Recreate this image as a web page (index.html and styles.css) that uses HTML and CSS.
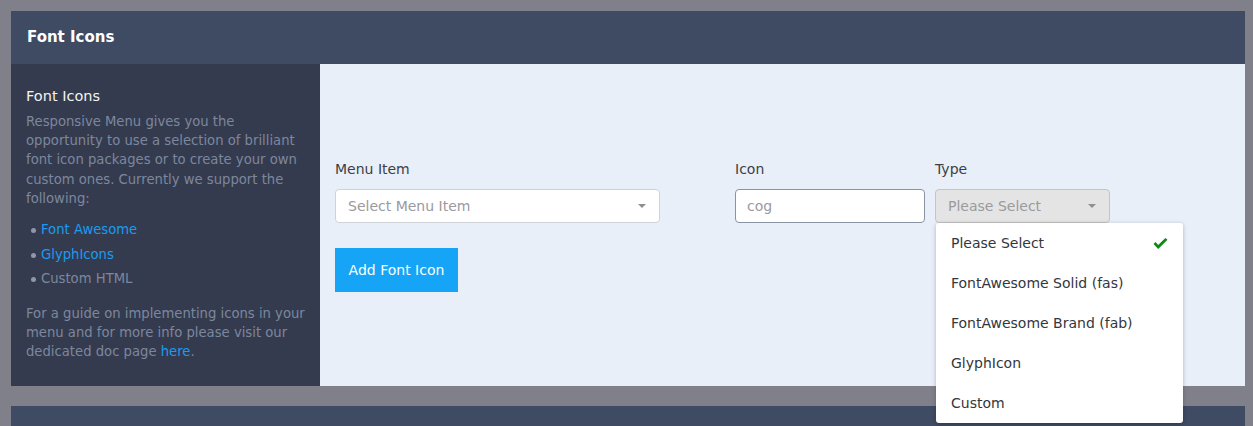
FILE: index.html
```html
<!DOCTYPE html>
<html>
<head>
<meta charset="utf-8">
<link rel="stylesheet" href="styles.css">
</head>
<body>
<div class="panel">
  <div class="panel-head">Font Icons</div>
  <div class="panel-body">
    <aside class="side">
      <h3 class="side-title">Font Icons</h3>
      <p class="side-text">Responsive Menu gives you the opportunity to use a selection of brilliant font icon packages or to create your own custom ones. Currently we support the following:</p>
      <ul class="side-list">
        <li><a class="link">Font Awesome</a></li>
        <li><a class="link">GlyphIcons</a></li>
        <li>Custom HTML</li>
      </ul>
      <p class="side-text">For a guide on implementing icons in your menu and for more info please visit our dedicated doc page <a class="link">here</a>.</p>
    </aside>
    <main class="content">
      <div class="form-row">
        <div class="field field-menu">
          <label class="label">Menu Item</label>
          <div class="select">
            <span class="placeholder">Select Menu Item</span>
            <span class="caret"></span>
          </div>
        </div>
        <div class="field field-icon">
          <label class="label">Icon</label>
          <div class="input"><span class="placeholder">cog</span></div>
        </div>
        <div class="field field-type">
          <label class="label">Type</label>
          <div class="select disabled">
            <span class="placeholder">Please Select</span>
            <span class="caret"></span>
          </div>
          <ul class="dropdown">
            <li class="opt selected">Please Select
              <svg class="check" viewBox="0 0 16 14" width="15" height="13"><path d="M0.5 7.5 L5.5 12.8 L15.5 3 L13.3 1 L5.5 8.6 L2.7 5.4 Z" fill="#0b8a12"/></svg>
            </li>
            <li class="opt">FontAwesome Solid (fas)</li>
            <li class="opt">FontAwesome Brand (fab)</li>
            <li class="opt">GlyphIcon</li>
            <li class="opt">Custom</li>
          </ul>
        </div>
      </div>
      <button class="btn">Add Font Icon</button>
    </main>
  </div>
</div>
<div class="panel next">
  <div class="panel-head"></div>
</div>
</body>
</html>
```
FILE: styles.css
```css
html, body {
  margin: 0;
  padding: 0;
}
body {
  background: #80808b;
  font-family: "DejaVu Sans", "Noto Sans", sans-serif;
  padding: 11px 8px 0 11px;
  height: 426px;
  box-sizing: border-box;
  overflow: hidden;
}
.panel {
  width: 1234px;
}
.panel-head {
  background: #3f4a63;
  color: #ffffff;
  font-weight: bold;
  font-size: 15px;
  height: 53px;
  line-height: 53px;
  padding-left: 16px;
  box-sizing: border-box;
}
.panel-body {
  display: flex;
  height: 322px;
}
.side {
  width: 309px;
  background: #343b4e;
  padding: 22px 10px 0 15px;
  box-sizing: border-box;
}
.side-title {
  margin: 0 0 6px;
  font-weight: normal;
  font-size: 14.5px;
  color: #f3f3f3;
  line-height: 20px;
}
.side-text {
  margin: 0;
  font-size: 13.2px;
  line-height: 19.2px;
  color: #7c879e;
}
.side-list {
  margin: 10px 0 12px;
  padding: 0 0 0 15px;
  font-size: 13.2px;
  color: #7c879e;
  list-style: none;
}
.side-list li {
  line-height: 24.5px;
  position: relative;
}
.side-list li::before {
  content: "";
  position: absolute;
  left: -10px;
  top: 10px;
  width: 5px;
  height: 5px;
  border-radius: 50%;
  background: #8e97aa;
}
.link {
  color: #1a9cf0;
}
.content {
  flex: 1;
  background: #e8eff9;
  padding: 95px 15px 0 15px;
  box-sizing: border-box;
}
.form-row {
  display: flex;
}
.field {
  display: flex;
  flex-direction: column;
}
.field-menu {
  width: 325px;
  margin-right: 75px;
}
.field-icon {
  width: 190px;
  margin-right: 10px;
}
.field-type {
  width: 175px;
  position: relative;
}
.label {
  font-size: 14px;
  color: #3e3e44;
  line-height: 20px;
  margin-bottom: 10px;
}
.select, .input {
  height: 34px;
  box-sizing: border-box;
  background: #fff;
  border: 1px solid #cfd3d9;
  border-radius: 4px;
  display: flex;
  align-items: center;
  padding: 0 12px;
  font-size: 14px;
}
.input {
  border-color: #8a93a3;
  padding-left: 11px;
}
.select.disabled {
  background: #e4e4e4;
  border-color: #c4c4c4;
}
.placeholder {
  color: #9a9a9f;
  flex: 1;
}
.caret {
  width: 0;
  height: 0;
  border-left: 4px solid transparent;
  border-right: 4px solid transparent;
  border-top: 4px solid #8f8f8f;
  margin-right: 1px;
}
.dropdown {
  position: absolute;
  top: 64px;
  left: 1px;
  width: 247px;
  margin: 0;
  padding: 0;
  list-style: none;
  background: #fff;
  border-radius: 3px;
  box-shadow: 0 1px 4px rgba(0,0,0,0.25);
}
.opt {
  height: 40px;
  line-height: 40px;
  padding: 0 15px;
  font-size: 14px;
  color: #33363d;
  display: flex;
  align-items: center;
  justify-content: space-between;
}
.check {
  margin-right: 0;
}
.btn {
  margin-top: 25px;
  background: #16a4f6;
  color: #fff;
  border: none;
  border-radius: 0;
  height: 44px;
  width: 123px;
  font-family: inherit;
  font-size: 14px;
  padding: 0;
}
.next {
  margin-top: 20px;
}
```
